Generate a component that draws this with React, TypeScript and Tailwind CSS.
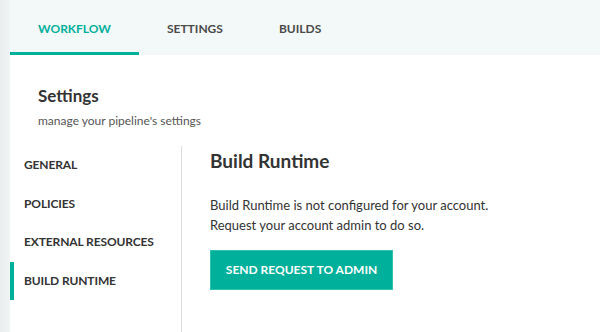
import React from 'react';

const tabs = ['Workflow', 'Settings', 'Builds'];
const menu = ['General', 'Policies', 'External Resources', 'Build Runtime'];

const App: React.FC = () => {
  return (
    <div
      className="flex w-[600px] h-[332px] bg-white overflow-hidden"
      style={{ fontFamily: 'Lato, "Open Sans", sans-serif' }}
    >
      <div className="w-[10px] shrink-0 bg-gradient-to-r from-[#e9eded] to-[#f1f4f4]" />

      <div className="flex-1 flex flex-col">
        <nav className="h-[55px] bg-[#f3f8f8] flex items-stretch">
          {tabs.map((t, i) => (
            <button
              key={t}
              className={`relative px-7 pt-[2px] text-[12px] font-bold uppercase ${
                i === 0 ? 'text-[#00b09b]' : 'text-[#4a4a4a]'
              }`}
            >
              {t}
              {i === 0 && <span className="absolute left-0 right-0 bottom-0 h-[3px] bg-[#00b09b]" />}
            </button>
          ))}
        </nav>

        <div className="pl-7 pt-[30px] h-[91px]">
          <h1 className="text-[17px] font-bold text-[#333] leading-[22px]">Settings</h1>
          <p className="mt-[6px] text-[12px] text-[#555] leading-[15px]">manage your pipeline's settings</p>
        </div>

        <div className="flex flex-1">
          <aside className="w-[172px] shrink-0 border-r border-[#dcdcdc]">
            {menu.map((m, i) => (
              <div key={m} className="relative h-[38.5px] flex items-center pl-[14px]">
                {i === menu.length - 1 && (
                  <span className="absolute left-0 top-0 bottom-0 w-[4px] bg-[#00b09b]" />
                )}
                <span className="text-[12px] font-bold uppercase text-[#333] tracking-[-0.01em]">{m}</span>
              </div>
            ))}
          </aside>

          <main className="pl-[28px] pt-[2px]">
            <h2 className="text-[19px] font-bold text-[#333] leading-[26px]">Build Runtime</h2>
            <p className="mt-[21px] text-[13px] text-[#333] leading-[20px]">
              Build Runtime is not configured for your account.
              <br />
              Request your account admin to do so.
            </p>
            <button className="mt-[15px] w-[183px] h-[40px] bg-[#00b09b] text-white text-[12px] font-bold uppercase border border-[#2fc3b1]">
              Send Request to Admin
            </button>
          </main>
        </div>
      </div>
    </div>
  );
};

export default App;
